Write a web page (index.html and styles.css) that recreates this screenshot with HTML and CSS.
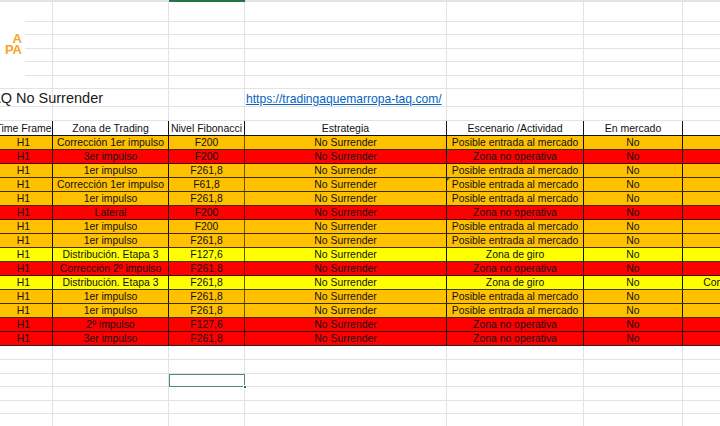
FILE: index.html
```html
<!DOCTYPE html>
<html lang="es">
<head>
<meta charset="utf-8">
<title>TAQ No Surrender</title>
<link rel="stylesheet" href="styles.css">
</head>
<body>
<main class="sheet">
<table class="grid">
<colgroup><col class="c1"><col class="c2"><col class="c3"><col class="c4"><col class="c5"><col class="c6"><col class="c7"></colgroup>
<tbody>
<tr class="r-top"><td></td><td></td><td class="active-col"></td><td></td><td></td><td></td><td></td></tr>
<tr class="r20"><td></td><td></td><td></td><td></td><td></td><td></td><td></td></tr>
<tr class="r13"><td></td><td></td><td></td><td></td><td></td><td></td><td></td></tr>
<tr class="r14"><td></td><td></td><td></td><td></td><td></td><td></td><td></td></tr>
<tr class="r13"><td></td><td></td><td></td><td></td><td></td><td></td><td></td></tr>
<tr class="r14"><td></td><td></td><td></td><td></td><td></td><td></td><td></td></tr>
<tr class="r13"><td></td><td></td><td></td><td></td><td></td><td></td><td></td></tr>
<tr class="r18"><td class="title">AQ No Surrender</td><td></td><td></td><td class="linkcell" colspan="1"><a href="#">https://tradingaquemarropa-taq.com/</a></td><td></td><td></td><td></td></tr>
<tr class="r14"><td></td><td></td><td></td><td></td><td></td><td></td><td></td></tr>
<tr class="head"><th>Time Frame</th><th>Zona de Trading</th><th>Nivel Fibonacci</th><th>Estrategia</th><th>Escenario /Actividad</th><th>En mercado</th><th></th></tr>
<tr class="o"><td>H1</td><td>Corrección 1er impulso</td><td>F200</td><td>No Surrender</td><td>Posible entrada al mercado</td><td>No</td><td></td></tr>
<tr class="x"><td>H1</td><td>3er impulso</td><td>F200</td><td>No Surrender</td><td class="flag">Zona no operativa</td><td>No</td><td></td></tr>
<tr class="o"><td>H1</td><td>1er impulso</td><td>F261,8</td><td>No Surrender</td><td>Posible entrada al mercado</td><td>No</td><td></td></tr>
<tr class="o"><td>H1</td><td>Corrección 1er impulso</td><td>F61,8</td><td>No Surrender</td><td class="flag">Posible entrada al mercado</td><td>No</td><td></td></tr>
<tr class="o"><td>H1</td><td>1er impulso</td><td>F261,8</td><td>No Surrender</td><td>Posible entrada al mercado</td><td>No</td><td></td></tr>
<tr class="x"><td>H1</td><td>Lateral</td><td>F200</td><td>No Surrender</td><td>Zona no operativa</td><td>No</td><td></td></tr>
<tr class="o"><td>H1</td><td>1er impulso</td><td>F200</td><td>No Surrender</td><td>Posible entrada al mercado</td><td>No</td><td></td></tr>
<tr class="o"><td>H1</td><td>1er impulso</td><td>F261,8</td><td>No Surrender</td><td>Posible entrada al mercado</td><td>No</td><td></td></tr>
<tr class="y"><td>H1</td><td>Distribución. Etapa 3</td><td>F127,6</td><td>No Surrender</td><td>Zona de giro</td><td>No</td><td></td></tr>
<tr class="x"><td>H1</td><td>Corrección 2º impulso</td><td>F261,8</td><td>No Surrender</td><td>Zona no operativa</td><td>No</td><td></td></tr>
<tr class="y"><td>H1</td><td>Distribución. Etapa 3</td><td>F261,8</td><td>No Surrender</td><td>Zona de giro</td><td>No</td><td>Continuación</td></tr>
<tr class="o"><td>H1</td><td>1er impulso</td><td>F261,8</td><td>No Surrender</td><td>Posible entrada al mercado</td><td>No</td><td></td></tr>
<tr class="o"><td>H1</td><td>1er impulso</td><td>F261,8</td><td>No Surrender</td><td>Posible entrada al mercado</td><td>No</td><td></td></tr>
<tr class="x"><td>H1</td><td>2º impulso</td><td>F127,6</td><td>No Surrender</td><td>Zona no operativa</td><td>No</td><td></td></tr>
<tr class="x last"><td>H1</td><td>3er impulso</td><td>F261,8</td><td>No Surrender</td><td>Zona no operativa</td><td>No</td><td></td></tr>
<tr class="r14"><td></td><td></td><td></td><td></td><td></td><td></td><td></td></tr>
<tr class="r14"><td></td><td></td><td></td><td></td><td></td><td></td><td></td></tr>
<tr class="r13"><td></td><td></td><td class="selected"></td><td></td><td></td><td></td><td></td></tr>
<tr class="r14"><td></td><td></td><td></td><td></td><td></td><td></td><td></td></tr>
<tr class="r13"><td></td><td></td><td></td><td></td><td></td><td></td><td></td></tr>
<tr class="r14"><td></td><td></td><td></td><td></td><td></td><td></td><td></td></tr>
</tbody>
</table>
<div class="logo"><span>A</span><span>PA</span></div>
</main>
</body>
</html>
```

FILE: styles.css
```css
html, body {
  margin: 0;
  width: 720px;
  height: 426px;
  overflow: hidden;
  background: #fff;
}
.sheet {
  position: relative;
  width: 720px;
  height: 426px;
  overflow: hidden;
}
.grid {
  border-collapse: collapse;
  table-layout: fixed;
  width: 790px;
  margin-left: -6px;
  font: 10.4px/1 "Liberation Sans", Arial, sans-serif;
  color: #111;
}
.c1 { width: 58px; }
.c2 { width: 116px; }
.c3 { width: 76px; }
.c4 { width: 202px; }
.c5 { width: 137px; }
.c6 { width: 99px; }
.c7 { width: 102px; }
.grid td, .grid th {
  border: 1px solid #e3e3e3;
  padding: 0;
  text-align: center;
  white-space: nowrap;
  font-weight: 400;
  position: relative;
  overflow: visible;
}
.r-top { height: 1px; background: #e4e4e4; }
.r-top td { border-color: #e4e4e4; padding: 0; font-size: 0; line-height: 0; }
.r-top .active-col { background: #217346; border-color: #217346; }
.r13 { height: 13px; }
.r14 { height: 14px; }
.r18 { height: 18px; }
.r20 { height: 20px; }
.grid td.title {
  font-size: 14.5px;
  text-align: left;
  text-indent: -4px;
  padding-top: 2px;
  color: #1a1a1a;
}
.grid td.linkcell {
  font-size: 12.1px;
  text-align: left;
  padding-left: 1px;
  padding-top: 3px;
}
.linkcell a { color: #0563c1; text-decoration: underline; }
.head { height: 15px; }
.grid .head th { border: 1px solid #111; background: #fff; font-size: 10.5px; padding-top: 1px; }
.o, .x, .y { height: 14px; }
.grid .o td, .grid .x td, .grid .y td {
  border: 1px solid #111;
  border-top-color: #3d3000;
  border-bottom-color: #3d3000;
  padding-top: 2px;
}
.grid .o td { background: #ffc000; }
.grid .x td { background: #ff0000; border-top-color: #4d0000; border-bottom-color: #4d0000; }
.grid .y td { background: #ffff00; border-top-color: #3d3d00; border-bottom-color: #3d3d00; }
.grid .o td:nth-child(3), .grid .y td:nth-child(3) { border-right-color: #6b5200; }
.grid .x td:nth-child(3) { border-right-color: #5c0000; }
.grid .last td { border-bottom: 1px solid #222; }
.flag::before {
  content: "";
  position: absolute;
  left: 0;
  top: 0;
  border-top: 3px solid #217346;
  border-right: 3px solid transparent;
}
.grid td.selected {
  outline: 1.5px solid #4a8f6c;
  outline-offset: -1px;
}
.selected::after {
  content: "";
  position: absolute;
  right: -3px;
  bottom: -3px;
  width: 4px;
  height: 4px;
  background: #217346;
  border: 1px solid #fff;
  box-sizing: border-box;
}
.logo {
  position: absolute;
  left: 0;
  top: 2px;
  width: 25px;
  height: 85px;
  background: #fff;
  display: flex;
  flex-direction: column;
  align-items: flex-end;
  justify-content: center;
  padding-right: 3px;
  padding-bottom: 2px;
  box-sizing: border-box;
  color: #f5a52a;
  font: 700 13px/11px "Liberation Sans", Arial, sans-serif;
}
```
